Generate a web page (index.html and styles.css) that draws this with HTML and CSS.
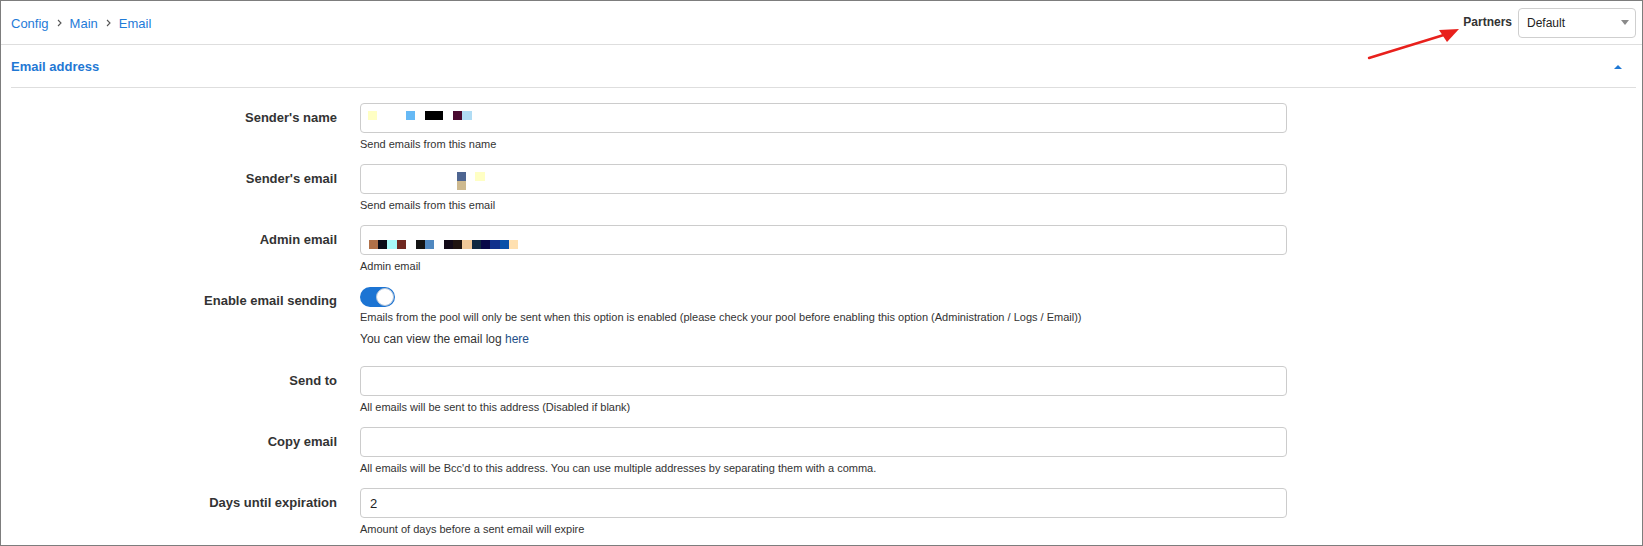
FILE: index.html
```html
<!DOCTYPE html>
<html>
<head>
<meta charset="utf-8">
<link rel="stylesheet" href="styles.css">
</head>
<body>
<div class="frame">
  <div class="topbar">
    <nav class="crumbs">
      <a>Config</a>
      <svg class="chev" width="5" height="8" viewBox="0 0 5 8"><polyline points="1,1 4,4 1,7" fill="none" stroke="#555" stroke-width="1.1"/></svg>
      <a>Main</a>
      <svg class="chev" width="5" height="8" viewBox="0 0 5 8"><polyline points="1,1 4,4 1,7" fill="none" stroke="#555" stroke-width="1.1"/></svg>
      <a>Email</a>
    </nav>
    <div class="partners">
      <span class="partners-label">Partners</span>
      <div class="select"><span>Default</span><i class="select-caret"></i></div>
    </div>
  </div>

  <div class="panel">
    <div class="panel-head">
      <span class="panel-title">Email address</span>
      <i class="collapse-caret"></i>
    </div>

    <div class="form">
      <div class="row">
        <label class="label">Sender's name</label>
        <div class="field">
          <div class="input">
            <svg class="redact" width="160" height="28" viewBox="0 0 160 28">
              <rect x="7" y="7" width="9" height="9" fill="#ffffc4"/>
              <rect x="45" y="7" width="9" height="9" fill="#66b9f5"/>
              <rect x="64" y="7" width="18" height="9" fill="#000"/>
              <rect x="92" y="7" width="9" height="9" fill="#4a0a30"/>
              <rect x="101" y="7" width="10" height="9" fill="#b0dcf4"/>
            </svg>
          </div>
          <div class="help">Send emails from this name</div>
        </div>
      </div>

      <div class="row">
        <label class="label">Sender's email</label>
        <div class="field">
          <div class="input">
            <svg class="redact" width="160" height="28" viewBox="0 0 160 28">
              <rect x="96" y="7" width="9" height="9" fill="#4e6591"/>
              <rect x="96" y="16" width="9" height="9" fill="#cdb98f"/>
              <rect x="114" y="7" width="10" height="9" fill="#ffffc4"/>
            </svg>
          </div>
          <div class="help">Send emails from this email</div>
        </div>
      </div>

      <div class="row">
        <label class="label">Admin email</label>
        <div class="field">
          <div class="input">
            <svg class="redact" width="160" height="28" viewBox="0 0 160 28">
              <rect x="8" y="14" width="9" height="9" fill="#b07048"/>
              <rect x="17" y="14" width="9" height="9" fill="#0a0a16"/>
              <rect x="26" y="14" width="10" height="9" fill="#a8f8f8"/>
              <rect x="36" y="14" width="9" height="9" fill="#702820"/>
              <rect x="55" y="14" width="9" height="9" fill="#141414"/>
              <rect x="64" y="14" width="9" height="9" fill="#5088c0"/>
              <rect x="83" y="14" width="9" height="9" fill="#120a18"/>
              <rect x="92" y="14" width="9" height="9" fill="#201410"/>
              <rect x="101" y="14" width="10" height="9" fill="#f0c898"/>
              <rect x="111" y="14" width="9" height="9" fill="#102840"/>
              <rect x="120" y="14" width="9" height="9" fill="#080848"/>
              <rect x="129" y="14" width="10" height="9" fill="#10308c"/>
              <rect x="139" y="14" width="9" height="9" fill="#0850a8"/>
              <rect x="148" y="14" width="9" height="9" fill="#ffe0b0"/>
            </svg>
          </div>
          <div class="help">Admin email</div>
        </div>
      </div>

      <div class="row">
        <label class="label">Enable email sending</label>
        <div class="field">
          <div class="toggle"><span class="knob"></span></div>
          <div class="help help-tight">Emails from the pool will only be sent when this option is enabled (please check your pool before enabling this option (Administration / Logs / Email))</div>
          <div class="note">You can view the email log <a class="link">here</a></div>
        </div>
      </div>

      <div class="row">
        <label class="label">Send to</label>
        <div class="field">
          <div class="input"></div>
          <div class="help">All emails will be sent to this address (Disabled if blank)</div>
        </div>
      </div>

      <div class="row">
        <label class="label">Copy email</label>
        <div class="field">
          <div class="input"></div>
          <div class="help">All emails will be Bcc'd to this address. You can use multiple addresses by separating them with a comma.</div>
        </div>
      </div>

      <div class="row">
        <label class="label">Days until expiration</label>
        <div class="field">
          <div class="input"><span class="value">2</span></div>
          <div class="help">Amount of days before a sent email will expire</div>
        </div>
      </div>
    </div>
  </div>

  <svg class="arrow" width="1643" height="546" viewBox="0 0 1643 546">
    <line x1="1369" y1="58" x2="1447" y2="34" stroke="#e8201c" stroke-width="2.4" stroke-linecap="round"/>
    <polygon points="1459,29 1439,30 1447,42" fill="#e8201c"/>
  </svg>
</div>
</body>
</html>
```

FILE: styles.css
```css
html, body {
  margin: 0;
  padding: 0;
  background: #fff;
}

body {
  font-family: "Liberation Sans", Arial, sans-serif;
  color: #333;
}

.frame {
  position: relative;
  width: 1643px;
  height: 546px;
  box-sizing: border-box;
  border: 1px solid #7d7d7d;
  overflow: hidden;
}

.topbar {
  display: flex;
  justify-content: space-between;
  align-items: center;
  height: 43px;
  border-bottom: 1px solid #dedede;
  padding: 0 6px 0 10px;
}

.crumbs {
  display: flex;
  align-items: center;
  gap: 8px;
  font-size: 13px;
  padding-top: 2px;
}

.crumbs a {
  color: #1f7bd8;
}

.chev {
  display: block;
  margin-top: -2px;
}

.partners {
  display: flex;
  align-items: center;
  gap: 6px;
}

.partners-label {
  font-weight: bold;
  font-size: 12px;
  color: #333;
  margin-top: -2px;
}

.select {
  width: 118px;
  height: 30px;
  box-sizing: border-box;
  border: 1px solid #cfcfcf;
  border-radius: 4px;
  display: flex;
  align-items: center;
  justify-content: space-between;
  padding: 0 6px 0 8px;
  font-size: 12px;
  color: #222;
}

.select-caret {
  width: 0;
  height: 0;
  border-left: 4px solid transparent;
  border-right: 4px solid transparent;
  border-top: 5px solid #8a8a8a;
  margin-top: -1px;
}

.panel {
  padding: 0 6px 0 10px;
}

.panel-head {
  height: 42px;
  display: flex;
  align-items: center;
  justify-content: space-between;
  border-bottom: 1px solid #dedede;
}

.panel-title {
  color: #1f78d4;
  font-weight: bold;
  font-size: 13px;
}

.collapse-caret {
  width: 0;
  height: 0;
  border-left: 4px solid transparent;
  border-right: 4px solid transparent;
  border-bottom: 4px solid #1f78d4;
  margin-right: 14px;
  margin-top: 2px;
}

.form {
  padding-top: 15px;
}

.row {
  display: flex;
  gap: 23px;
  margin-bottom: 12px;
}

.label {
  width: 326px;
  flex: none;
  text-align: right;
  font-weight: bold;
  font-size: 13px;
  line-height: 16px;
  padding-top: 7px;
  color: #333;
}

.field {
  width: 927px;
  flex: none;
}

.input {
  position: relative;
  height: 30px;
  box-sizing: border-box;
  border: 1px solid #cccccc;
  border-radius: 4px;
  display: flex;
  align-items: center;
  padding-left: 9px;
}

.redact {
  position: absolute;
  left: 0;
  top: 0;
}

.value {
  font-size: 13px;
  color: #222;
}

.help {
  font-size: 11px;
  line-height: 16px;
  margin-top: 3px;
  color: #333;
}

.help-tight {
  margin-top: 2px;
}

.note {
  font-size: 12px;
  line-height: 18px;
  margin-top: 5px;
  margin-bottom: 6px;
  color: #333;
}

.link {
  color: #24508a;
}

.toggle {
  position: relative;
  width: 35px;
  height: 20px;
  margin-top: 1px;
  border-radius: 10px;
  background: #1c74d3;
}

.knob {
  position: absolute;
  right: 1px;
  top: 1px;
  width: 18px;
  height: 18px;
  box-sizing: border-box;
  border-radius: 50%;
  background: #fff;
  border: 1px solid #b5c6da;
}

.arrow {
  position: absolute;
  left: -1px;
  top: -1px;
  pointer-events: none;
}
```
